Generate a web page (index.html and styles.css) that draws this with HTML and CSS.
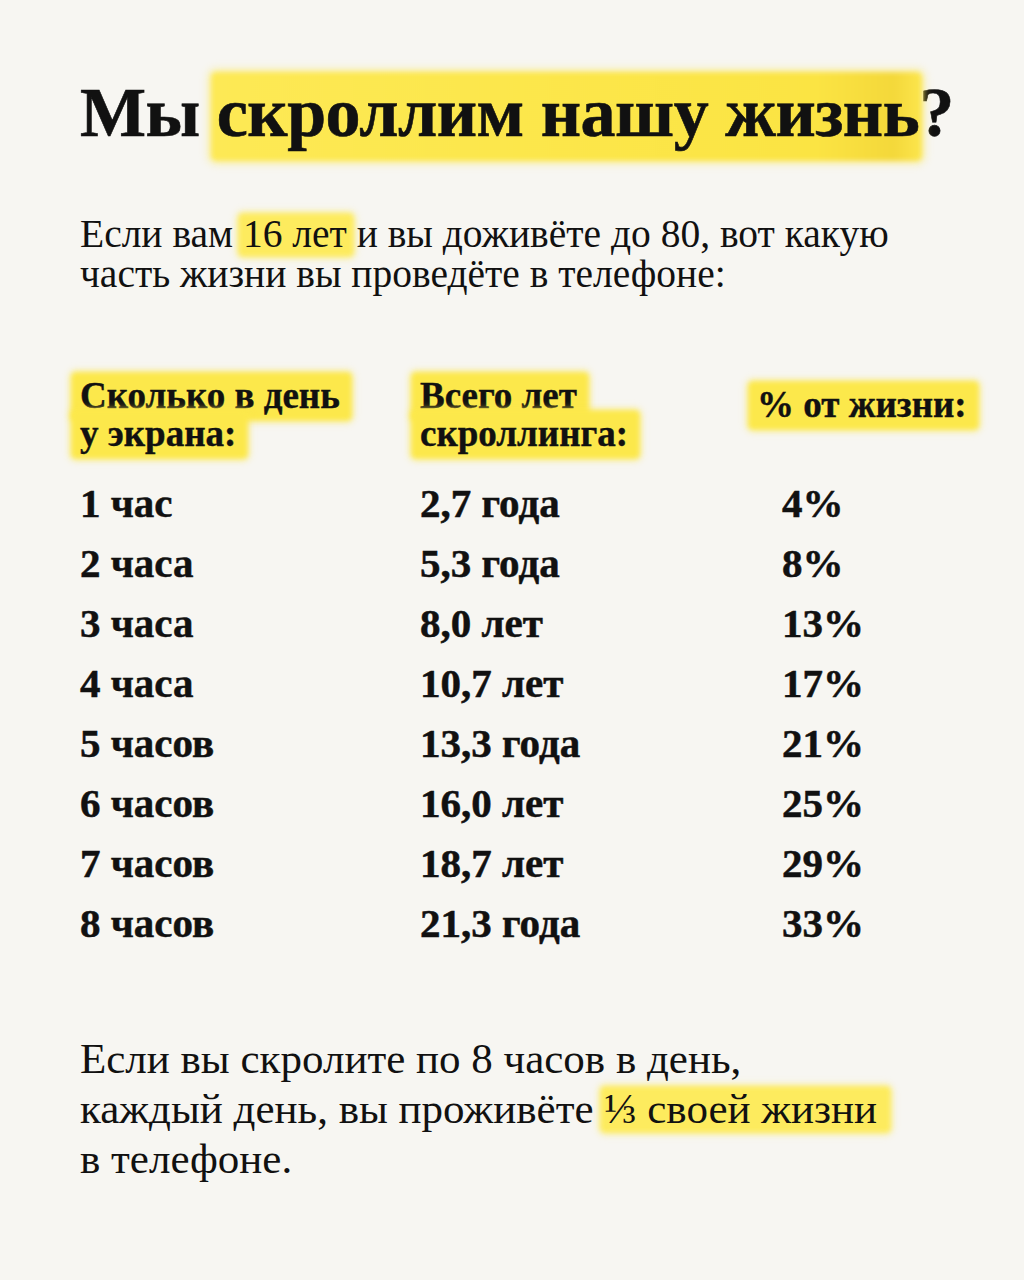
FILE: index.html
```html
<!DOCTYPE html>
<html lang="ru">
<head>
<meta charset="utf-8">
<link rel="stylesheet" href="styles.css">
</head>
<body>
<main class="page">
  <h1 class="title">Мы <span class="hl hl-title">скроллим нашу жизнь</span>?</h1>
  <p class="intro">Если вам <span class="hl hl-small">16 лет</span> и вы доживёте до 80, вот какую<br>часть жизни вы проведёте в телефоне:</p>
  <div class="table">
    <div class="th"><span class="hl hl-head">Сколько в день</span><br><span class="hl hl-head">у экрана:</span></div>
    <div class="th"><span class="hl hl-head">Всего лет</span><br><span class="hl hl-head">скроллинга:</span></div>
    <div class="th th-pct"><span class="hl hl-head">% от жизни:</span></div>

    <div class="td">1 час</div><div class="td">2,7 года</div><div class="td td-pct">4%</div>
    <div class="td">2 часа</div><div class="td">5,3 года</div><div class="td td-pct">8%</div>
    <div class="td">3 часа</div><div class="td">8,0 лет</div><div class="td td-pct">13%</div>
    <div class="td">4 часа</div><div class="td">10,7 лет</div><div class="td td-pct">17%</div>
    <div class="td">5 часов</div><div class="td">13,3 года</div><div class="td td-pct">21%</div>
    <div class="td">6 часов</div><div class="td">16,0 лет</div><div class="td td-pct">25%</div>
    <div class="td">7 часов</div><div class="td">18,7 лет</div><div class="td td-pct">29%</div>
    <div class="td">8 часов</div><div class="td">21,3 года</div><div class="td td-pct">33%</div>
  </div>
  <p class="outro">Если вы скролите по 8 часов в день,<br>каждый день, вы проживёте <span class="hl hl-small hl-third">⅓ своей жизни</span><br>в телефоне.</p>
</main>
</body>
</html>
```
FILE: styles.css
```css
* { box-sizing: border-box; }
html, body { margin: 0; padding: 0; }
body {
  background: #f7f6f2;
  color: #111;
  font-family: "Liberation Serif", "Times New Roman", serif;
  width: 1024px;
  height: 1280px;
  overflow: hidden;
}
.page {
  padding: 73px 30px 0 80px;
}
.title {
  margin: 0;
  font-size: 70px;
  line-height: 80px;
  font-weight: 700;
  letter-spacing: -0.5px;
  -webkit-text-stroke: 0.6px #111;
  white-space: nowrap;
}
.hl {
  position: relative;
  z-index: 0;
}
.hl::before {
  content: "";
  position: absolute;
  z-index: -1;
  background: #fce84b;
  filter: blur(2.5px);
  border-radius: 5px;
}
.hl-title::before {
  left: -6px;
  right: -3px;
  top: -2px;
  bottom: -10px;
  background: linear-gradient(90deg, #fde955 0%, #fce74c 40%, #fbe443 85%, #f4d83a 96%, #fce64d 100%);
  box-shadow: 0 0 6px 3px rgba(252, 232, 80, 0.45);
}
.hl-small::before {
  left: -5px;
  right: -7px;
  top: 1px;
  bottom: -1px;
  background: #fdeb5e;
  box-shadow: 0 0 5px 2px rgba(252, 234, 90, 0.45);
}
.hl-third::before {
  left: -4px;
  right: -14px;
}
.hl-head::before {
  left: -9px;
  right: -12px;
  top: -3px;
  bottom: -5px;
  background: #fce84b;
  box-shadow: 0 0 5px 2px rgba(252, 232, 80, 0.45);
}
.intro {
  margin: 61px 0 0;
  font-size: 39.5px;
  line-height: 40px;
  white-space: nowrap;
}
.table {
  margin-top: 83px;
  display: grid;
  grid-template-columns: 340px 337px 1fr;
  font-weight: 700;
}
.th {
  font-size: 37px;
  line-height: 38px;
  margin-bottom: 20px;
  white-space: nowrap;
  -webkit-text-stroke: 0.4px #111;
}
.th-pct {
  padding-top: 9px;
}
.td {
  font-size: 41px;
  line-height: 60px;
  white-space: nowrap;
  -webkit-text-stroke: 0.5px #111;
}
.td-pct {
  padding-left: 25px;
}
.outro {
  margin: 81px 0 0;
  font-size: 43px;
  line-height: 50px;
  white-space: nowrap;
}
```
